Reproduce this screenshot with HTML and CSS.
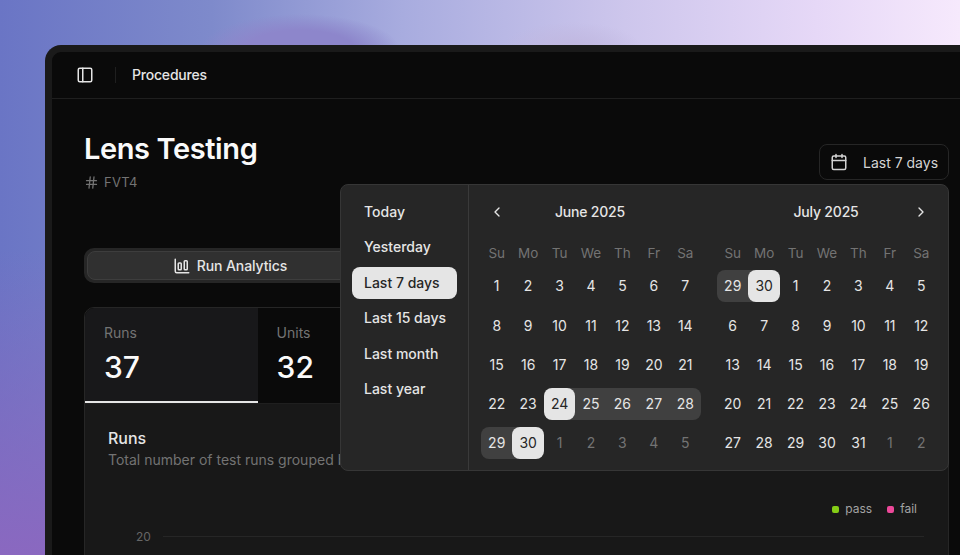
FILE: index.html
```html
<!DOCTYPE html>
<html lang="en">
<head>
  <meta charset="UTF-8">
  <meta name="viewport" content="width=device-width, initial-scale=1.0">
  <title>Lens Testing</title>
  <link rel="stylesheet" href="styles.css">
</head>
<body>
  <div class="window">
    <header class="topbar">
      <svg class="icon" viewBox="0 0 24 24"><rect x="3" y="3" width="18" height="18" rx="2"/><path d="M9 3v18"/></svg>
      <span class="topbar-sep"></span>
      <span class="topbar-title">Procedures</span>
    </header>

    <main class="content">
      <div class="page-head">
        <div>
          <h1 class="page-title">Lens Testing</h1>
          <p class="page-tag">
            <svg class="icon-sm" viewBox="0 0 24 24"><path d="M4 9h16M4 15h16M10 3 8 21M16 3l-2 18"/></svg>
            FVT4
          </p>
        </div>
        <button class="date-btn">
          <svg class="icon" viewBox="0 0 24 24"><path d="M8 2v4M16 2v4"/><rect x="3" y="4" width="18" height="18" rx="2"/><path d="M3 10h18"/></svg>
          Last 7 days
        </button>
      </div>

      <div class="segments">
        <button class="segment">
          <svg class="icon" viewBox="0 0 24 24"><path d="M3 3v16a2 2 0 0 0 2 2h16"/><rect x="7" y="8" width="4" height="9" rx="1"/><rect x="15" y="5" width="4" height="12" rx="1"/></svg>
          Run Analytics
        </button>
      </div>

      <section class="card">
        <div class="stats">
          <div class="stat stat-active">
            <div class="stat-label">Runs</div>
            <div class="stat-value">37</div>
          </div>
          <div class="stat">
            <div class="stat-label">Units</div>
            <div class="stat-value">32</div>
          </div>
        </div>
        <div class="chart">
          <h2 class="chart-title">Runs</h2>
          <p class="chart-sub">Total number of test runs grouped by</p>
          <div class="legend">
            <span class="legend-item"><i class="swatch swatch-pass"></i>pass</span>
            <span class="legend-item"><i class="swatch swatch-fail"></i>fail</span>
          </div>
          <div class="grid-row"><span class="grid-label">20</span><span class="grid-line"></span></div>
        </div>
      </section>

      <div class="popover">
        <ul class="presets">
          <li>Today</li>
          <li>Yesterday</li>
          <li class="preset-active">Last 7 days</li>
          <li>Last 15 days</li>
          <li>Last month</li>
          <li>Last year</li>
        </ul>
        <div class="months">
          <div class="month">
            <div class="month-head">
              <svg class="chev" viewBox="0 0 24 24"><path d="m15 18-6-6 6-6"/></svg>
              <span>June 2025</span>
              <i></i>
            </div>
            <div class="days">
              <b>Su</b><b>Mo</b><b>Tu</b><b>We</b><b>Th</b><b>Fr</b><b>Sa</b>
              <span>1</span><span>2</span><span>3</span><span>4</span><span>5</span><span>6</span><span>7</span>
              <span>8</span><span>9</span><span>10</span><span>11</span><span>12</span><span>13</span><span>14</span>
              <span>15</span><span>16</span><span>17</span><span>18</span><span>19</span><span>20</span><span>21</span>
              <span>22</span><span>23</span>
              <span class="edge-start"><em>24</em></span>
              <span class="range">25</span><span class="range">26</span><span class="range">27</span><span class="range range-last">28</span>
              <span class="range range-first">29</span>
              <span class="edge-end"><em>30</em></span>
              <span class="out">1</span><span class="out">2</span><span class="out">3</span><span class="out">4</span><span class="out">5</span>
            </div>
          </div>
          <div class="month">
            <div class="month-head">
              <i></i>
              <span>July 2025</span>
              <svg class="chev" viewBox="0 0 24 24"><path d="m9 18 6-6-6-6"/></svg>
            </div>
            <div class="days">
              <b>Su</b><b>Mo</b><b>Tu</b><b>We</b><b>Th</b><b>Fr</b><b>Sa</b>
              <span class="range range-first">29</span>
              <span class="edge-end"><em>30</em></span>
              <span>1</span><span>2</span><span>3</span><span>4</span><span>5</span>
              <span>6</span><span>7</span><span>8</span><span>9</span><span>10</span><span>11</span><span>12</span>
              <span>13</span><span>14</span><span>15</span><span>16</span><span>17</span><span>18</span><span>19</span>
              <span>20</span><span>21</span><span>22</span><span>23</span><span>24</span><span>25</span><span>26</span>
              <span>27</span><span>28</span><span>29</span><span>30</span><span>31</span><span class="out">1</span><span class="out">2</span>
            </div>
          </div>
        </div>
      </div>
    </main>
  </div>
</body>
</html>
```

FILE: styles.css
```css
* {
  box-sizing: border-box;
}
html, body {
  height: 100%;
  margin: 0;
  overflow: hidden;
}
body {
  font-family: Inter, "Liberation Sans", sans-serif;
  font-size: 14px;
  color: #e5e5e5;
  padding: 45px 0 0 45px;
  background-color: #6a74c4;
  background-image:
    radial-gradient(ellipse 100px 36px at 300px 50px, #8d86cb 0, #8d86cb 55%, rgba(141, 134, 203, 0) 100%),
    radial-gradient(ellipse 70px 26px at 572px 48px, #c0b7df 0, rgba(192, 183, 223, 0) 100%),
    linear-gradient(180deg, rgba(138, 104, 192, 0) 45%, #8a68c0 100%),
    linear-gradient(90deg, #6a75c5 0, #7e8acb 22%, #a8acdf 42%, #cdc6ec 65%, #e6d8f7 85%, #f6e9fc 100%);
}

.window {
  width: 936px;
  height: 510px;
  overflow: hidden;
  border: 7px solid #1a1a1a;
  border-right: 0;
  border-bottom: 0;
  border-top-left-radius: 16px;
  background: #0a0a0a;
}

.icon {
  width: 18px;
  height: 18px;
  fill: none;
  stroke: currentColor;
  stroke-width: 2;
  stroke-linecap: round;
  stroke-linejoin: round;
  flex-shrink: 0;
}
.icon-sm {
  width: 15px;
  height: 15px;
  fill: none;
  stroke: #737373;
  stroke-width: 2;
  stroke-linecap: round;
}

.topbar {
  height: 47px;
  display: flex;
  align-items: center;
  padding: 0 0 0 24px;
  border-bottom: 1px solid #1f1f1f;
}
.topbar-sep {
  width: 1px;
  height: 16px;
  margin: 0 16px 0 21px;
  background: #1f1f1f;
}
.topbar-title {
  margin-bottom: 1px;
  font-weight: 500;
  letter-spacing: -0.2px;
  color: #e5e5e5;
}

.content {
  position: relative;
  padding: 32px 32px 0;
}
.page-head {
  display: flex;
  justify-content: space-between;
  align-items: flex-start;
}
.page-title {
  margin: 0;
  font-size: 29px;
  line-height: 36px;
  font-weight: 600;
  letter-spacing: -0.4px;
  color: #fafafa;
}
.page-tag {
  display: flex;
  align-items: center;
  gap: 5px;
  margin: 5px 0 0;
  font-size: 13px;
  line-height: 20px;
  letter-spacing: 0.3px;
  color: #737373;
}
.date-btn {
  display: flex;
  align-items: center;
  gap: 15px;
  width: 130px;
  height: 36px;
  margin-top: 13px;
  padding: 0 0 0 10px;
  font: inherit;
  white-space: nowrap;
  color: #d4d4d4;
  background: #0a0a0a;
  border: 1px solid #262626;
  border-radius: 8px;
}

.segments {
  margin-top: 56px;
  height: 35px;
  padding: 3px;
  background: #262626;
  border-radius: 10px;
}
.segment {
  display: flex;
  align-items: center;
  justify-content: center;
  gap: 6px;
  width: 286px;
  height: 29px;
  padding: 0;
  font: inherit;
  font-weight: 500;
  letter-spacing: -0.1px;
  color: #e5e5e5;
  background: #303030;
  border: 1px solid #3d3d3d;
  border-radius: 8px;
}

.card {
  margin-top: 24px;
  height: 300px;
  background: #181818;
  border: 1px solid #262626;
  border-radius: 10px;
  overflow: hidden;
}
.stats {
  display: grid;
  grid-template-columns: repeat(5, 1fr);
  background: #0a0a0a;
  border-bottom: 1px solid #1f1f1f;
}
.stat {
  height: 95px;
  padding: 15px 19px 0;
  border-bottom: 2px solid transparent;
}
.stat-active {
  background: #18181a;
  border-bottom-color: #e5e5e5;
}
.stat-label {
  line-height: 20px;
  color: #737373;
}
.stat-value {
  margin-top: 6px;
  font-size: 30px;
  line-height: 36px;
  font-weight: 500;
  color: #fafafa;
}

.chart {
  padding: 23px 24px 0 23px;
}
.chart-title {
  margin: 0 0 1px;
  font-size: 16px;
  line-height: 22px;
  font-weight: 500;
  color: #e5e5e5;
}
.chart-sub {
  margin: 0;
  line-height: 20px;
  color: #737373;
}
.legend {
  display: flex;
  justify-content: flex-end;
  gap: 15px;
  margin-top: 31px;
  padding-right: 7px;
  font-size: 12px;
  line-height: 16px;
  color: #a3a3a3;
}
.legend-item {
  display: flex;
  align-items: center;
  gap: 6px;
}
.swatch {
  width: 7px;
  height: 7px;
  border-radius: 2px;
}
.swatch-pass {
  background: #84cc16;
}
.swatch-fail {
  background: #ec4899;
}
.grid-row {
  display: flex;
  align-items: center;
  margin-top: 12px;
  padding-left: 28px;
  font-size: 12px;
  color: #666;
}
.grid-label {
  width: 27px;
}
.grid-line {
  flex: 1;
  height: 1px;
  background: #262626;
}

.popover {
  position: absolute;
  left: 288px;
  top: 85px;
  width: 609px;
  height: 287px;
  display: flex;
  background: #262626;
  border: 1px solid #363636;
  border-radius: 8px;
}
.presets {
  width: 129px;
  margin: 0;
  padding: 11px;
  list-style: none;
  border-right: 1px solid #3a3a3a;
  display: flex;
  flex-direction: column;
  gap: 3.4px;
}
.presets li {
  height: 32px;
  line-height: 32px;
  padding-left: 12px;
  font-weight: 500;
  color: #e5e5e5;
  border-radius: 8px;
}
.presets .preset-active {
  background: #e5e5e5;
  color: #262626;
}
.months {
  flex: 1;
  display: flex;
  gap: 16px;
  padding: 11px 11px 0 12px;
}
.month {
  width: 220px;
}
.month-head {
  display: grid;
  grid-template-columns: 32px 1fr 32px;
  align-items: center;
  justify-items: center;
  height: 32px;
  font-weight: 500;
  letter-spacing: -0.2px;
}
.month-head span {
  margin: 0 2px 1px 0;
}
.chev {
  width: 16px;
  height: 16px;
  fill: none;
  stroke: #e5e5e5;
  stroke-width: 2;
  stroke-linecap: round;
  stroke-linejoin: round;
}
.days {
  display: grid;
  grid-template-columns: repeat(7, 1fr);
  grid-auto-rows: 32px;
  grid-template-rows: 20px;
  row-gap: 7.25px;
  margin-top: 15px;
}
.days b {
  font-weight: 400;
  font-size: 13.5px;
  line-height: 20px;
  text-align: center;
  color: #737373;
}
.days span {
  display: flex;
  align-items: center;
  justify-content: center;
  padding-bottom: 1px;
  color: #e5e5e5;
}
.days .out {
  color: #737373;
}
.days .range {
  background: #404040;
}
.days .range-first {
  border-radius: 8px 0 0 8px;
}
.days .range-last {
  border-radius: 0 8px 8px 0;
}
.days .edge-start, .days .edge-end {
  padding-bottom: 0;
}
.days .edge-start {
  background: linear-gradient(90deg, transparent 50%, #404040 50%);
}
.days .edge-end {
  background: linear-gradient(90deg, #404040 50%, transparent 50%);
}
.days em {
  width: 100%;
  height: 100%;
  display: flex;
  align-items: center;
  justify-content: center;
  padding-bottom: 1px;
  font-style: normal;
  color: #262626;
  background: #e5e5e5;
  border-radius: 8px;
}
```
